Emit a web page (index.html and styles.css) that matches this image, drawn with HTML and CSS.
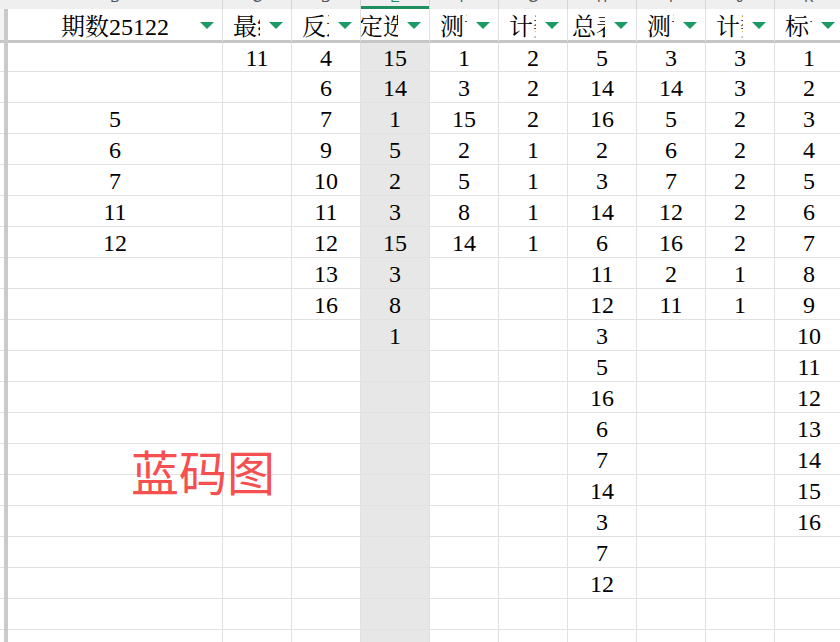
FILE: index.html
```html
<!DOCTYPE html>
<html lang="zh">
<head>
<meta charset="utf-8">
<title>蓝码图</title>
<link rel="stylesheet" href="styles.css">
</head>
<body>
<div class="app">
  <div class="rowhead">
    <div class="rh-strip"></div>
    <div class="rh-head"></div>
    <div class="rh-body"></div>
  </div>
  <div class="splitter"></div>
  <div class="sheet">
    <div class="strip">
      <div><span>B</span></div><div><span>C</span></div><div><span>D</span></div><div class="sel"><span>E</span></div><div><span>F</span></div><div><span>G</span></div><div><span>H</span></div><div><span>I</span></div><div><span>J</span></div><div><span>K</span></div>
    </div>
    <div class="head">
      <div><span class="ht">期数25122</span><span class="btn"></span></div>
      <div><span class="ht">最终</span><span class="btn"></span></div>
      <div><span class="ht">反选</span><span class="btn"></span></div>
      <div><span class="ht">定选码</span><span class="btn"></span></div>
      <div><span class="ht">测试</span><span class="btn"></span></div>
      <div><span class="ht">计数</span><span class="btn"></span></div>
      <div><span class="ht">：总表数1</span><span class="btn"></span></div>
      <div><span class="ht">测试</span><span class="btn"></span></div>
      <div><span class="ht">计数</span><span class="btn"></span></div>
      <div><span class="ht">标记</span><span class="btn"></span></div>
    </div>
    <div class="grid">
      <div></div><div>11</div><div>4</div><div>15</div><div>1</div><div>2</div><div>5</div><div>3</div><div>3</div><div>1</div>
      <div></div><div></div><div>6</div><div>14</div><div>3</div><div>2</div><div>14</div><div>14</div><div>3</div><div>2</div>
      <div>5</div><div></div><div>7</div><div>1</div><div>15</div><div>2</div><div>16</div><div>5</div><div>2</div><div>3</div>
      <div>6</div><div></div><div>9</div><div>5</div><div>2</div><div>1</div><div>2</div><div>6</div><div>2</div><div>4</div>
      <div>7</div><div></div><div>10</div><div>2</div><div>5</div><div>1</div><div>3</div><div>7</div><div>2</div><div>5</div>
      <div>11</div><div></div><div>11</div><div>3</div><div>8</div><div>1</div><div>14</div><div>12</div><div>2</div><div>6</div>
      <div>12</div><div></div><div>12</div><div>15</div><div>14</div><div>1</div><div>6</div><div>16</div><div>2</div><div>7</div>
      <div></div><div></div><div>13</div><div>3</div><div></div><div></div><div>11</div><div>2</div><div>1</div><div>8</div>
      <div></div><div></div><div>16</div><div>8</div><div></div><div></div><div>12</div><div>11</div><div>1</div><div>9</div>
      <div></div><div></div><div></div><div>1</div><div></div><div></div><div>3</div><div></div><div></div><div>10</div>
      <div></div><div></div><div></div><div></div><div></div><div></div><div>5</div><div></div><div></div><div>11</div>
      <div></div><div></div><div></div><div></div><div></div><div></div><div>16</div><div></div><div></div><div>12</div>
      <div></div><div></div><div></div><div></div><div></div><div></div><div>6</div><div></div><div></div><div>13</div>
      <div></div><div></div><div></div><div></div><div></div><div></div><div>7</div><div></div><div></div><div>14</div>
      <div></div><div></div><div></div><div></div><div></div><div></div><div>14</div><div></div><div></div><div>15</div>
      <div></div><div></div><div></div><div></div><div></div><div></div><div>3</div><div></div><div></div><div>16</div>
      <div></div><div></div><div></div><div></div><div></div><div></div><div>7</div><div></div><div></div><div></div>
      <div></div><div></div><div></div><div></div><div></div><div></div><div>12</div><div></div><div></div><div></div>
      <div></div><div></div><div></div><div></div><div></div><div></div><div></div><div></div><div></div><div></div>
      <div></div><div></div><div></div><div></div><div></div><div></div><div></div><div></div><div></div><div></div>
    </div>
  </div>
  <div class="stamp">蓝码图</div>
</div>
</body>
</html>
```
FILE: styles.css
```css
html, body {
  margin: 0;
  padding: 0;
  background: #fff;
  overflow: hidden;
}

.app {
  position: relative;
  display: flex;
  width: 840px;
  height: 642px;
  overflow: hidden;
  font-family: "Liberation Serif", "Noto Serif CJK SC", "Noto Sans CJK SC", serif;
  color: #000;
}

.rowhead {
  width: 4px;
  flex: none;
  display: flex;
  flex-direction: column;
}

.rh-strip {
  height: 9px;
  background: #efefef;
}

.rh-head {
  height: 31px;
  border-bottom: 3px solid #c6c6c6;
  background: #f4f4f4;
}

.rh-body {
  flex: 1;
  background: repeating-linear-gradient(to bottom, transparent 0 30px, #e1e1e1 30px 31px);
  background-position: 0 -2px;
}

.splitter {
  width: 4px;
  flex: none;
  background: linear-gradient(#efefef 0 9px, #cacaca 9px);
}

.sheet {
  flex: none;
  width: 836px;
}

.strip,
.head,
.grid {
  display: grid;
  grid-template-columns: 215px repeat(9, 69px);
}

.strip {
  height: 9px;
  background: #efefef;
}

.strip > div {
  border-right: 1px solid #d6d6d6;
  overflow: hidden;
  text-align: center;
  font: 14px/14px "Liberation Sans", sans-serif;
  color: #555;
}

.strip span {
  display: block;
  margin-top: -10px;
}

.strip .sel {
  color: #1e8f5e;
  box-shadow: inset 0 -3px 0 #1e8f5e;
}

.head {
  height: 34px;
}

.head > div {
  position: relative;
  box-sizing: border-box;
  border-right: 1px solid #e1e1e1;
  border-bottom: 3px solid #c6c6c6;
  display: flex;
  align-items: center;
  justify-content: center;
  overflow: hidden;
  white-space: nowrap;
  font-size: 24px;
}

.ht {
  flex: none;
}

.btn {
  position: absolute;
  right: 2px;
  top: 2px;
  width: 27px;
  height: 27px;
  background: #fff;
  box-shadow: -2px 0 0 #fff, 3px 0 0 #fff;
  display: flex;
  align-items: center;
  justify-content: center;
}

.btn::after {
  content: "";
  width: 0;
  height: 0;
  margin-top: 2px;
  border-left: 7px solid transparent;
  border-right: 7px solid transparent;
  border-top: 7px solid #1c9a66;
}

.grid {
  grid-template-rows: 29px;
  grid-auto-rows: 31px;
}

.grid > div {
  box-sizing: border-box;
  border-right: 1px solid #e1e1e1;
  border-bottom: 1px solid #e1e1e1;
  display: flex;
  align-items: center;
  justify-content: center;
  padding-top: 2px;
  font-size: 24px;
}

.grid > div:nth-child(10n+4) {
  background: #e7e7e7;
}

.stamp {
  position: absolute;
  left: 131px;
  top: 446px;
  font: 48px/1 "Noto Sans CJK SC", sans-serif;
  color: #f5504f;
  white-space: nowrap;
}
```
